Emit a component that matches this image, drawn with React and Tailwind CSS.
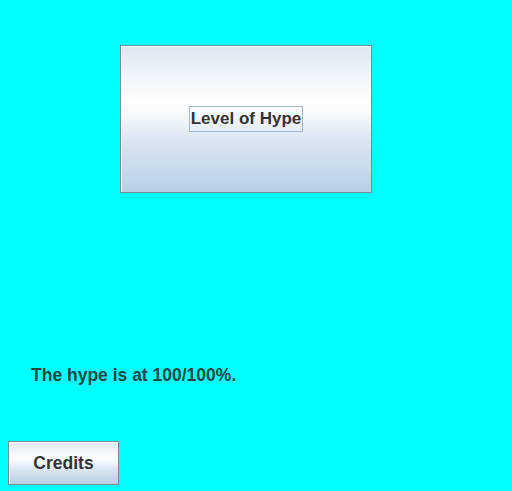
export default function App() {
  const metal =
    "bg-[linear-gradient(to_bottom,#dde8f3_0%,#ffffff_38%,#f2f6fb_50%,#dde8f3_62%,#b8cfe5_100%)]";

  return (
    <div
      className="flex h-[491px] w-[512px] flex-col bg-[#00ffff]"
      style={{ fontFamily: '"Liberation Sans", Arial, sans-serif' }}
    >
      {/* main hype button */}
      <div className="ml-[120px] mt-[45px]">
        <button
          className={`flex h-[148px] w-[252px] items-center justify-center border border-[#7a8a99] ${metal} shadow-[inset_1px_1px_0_#ffffff]`}
        >
          <span className="border border-[#a3b8cc] px-[1px] py-[3px] text-[17px] font-bold leading-[18px] text-[#333333]">
            Level of Hype
          </span>
        </button>
      </div>

      {/* status label */}
      <div className="ml-[31px] mt-[172px] text-[17.5px] font-bold leading-[20px] text-[#1f4545]">
        The hype is at 100/100%.
      </div>

      {/* credits */}
      <div className="ml-[8px] mt-[56px]">
        <button
          className={`flex h-[44px] w-[111px] items-center justify-center border border-[#7a8a99] ${metal} shadow-[inset_1px_1px_0_#ffffff] text-[17.5px] font-bold text-[#333333]`}
        >
          Credits
        </button>
      </div>
    </div>
  );
}
